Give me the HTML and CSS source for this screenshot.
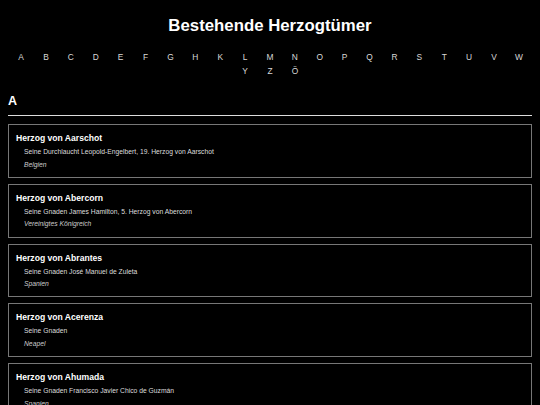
FILE: index.html
```html
<!DOCTYPE html>
<html lang="de">
<head>
<meta charset="utf-8">
<title>Bestehende Herzogtümer</title>
<link rel="stylesheet" href="styles.css">
</head>
<body>
<h1 class="title">Bestehende Herzogtümer</h1>
<nav class="alpha">
  <a href="#A">A</a><a href="#B">B</a><a href="#C">C</a><a href="#D">D</a><a href="#E">E</a><a href="#F">F</a><a href="#G">G</a><a href="#H">H</a><a href="#K">K</a><a href="#L">L</a><a href="#M">M</a><a href="#N">N</a><a href="#O">O</a><a href="#P">P</a><a href="#Q">Q</a><a href="#R">R</a><a href="#S">S</a><a href="#T">T</a><a href="#U">U</a><a href="#V">V</a><a href="#W">W</a><a href="#Y">Y</a><a href="#Z">Z</a><a href="#Oe">Ö</a>
</nav>
<section class="group" id="A">
  <h2 class="letter">A</h2>
  <div class="list">
    <div class="card">
      <div class="name">Herzog von Aarschot</div>
      <div class="holder">Seine Durchlaucht Leopold-Engelbert, 19. Herzog von Aarschot</div>
      <div class="country">Belgien</div>
    </div>
    <div class="card">
      <div class="name">Herzog von Abercorn</div>
      <div class="holder">Seine Gnaden James Hamilton, 5. Herzog von Abercorn</div>
      <div class="country">Vereinigtes Königreich</div>
    </div>
    <div class="card">
      <div class="name">Herzog von Abrantes</div>
      <div class="holder">Seine Gnaden José Manuel de Zuleta</div>
      <div class="country">Spanien</div>
    </div>
    <div class="card">
      <div class="name">Herzog von Acerenza</div>
      <div class="holder">Seine Gnaden</div>
      <div class="country">Neapel</div>
    </div>
    <div class="card">
      <div class="name">Herzog von Ahumada</div>
      <div class="holder">Seine Gnaden Francisco Javier Chico de Guzmán</div>
      <div class="country">Spanien</div>
    </div>
  </div>
</section>
</body>
</html>
```
FILE: styles.css
```css
html, body {
  background: #000;
}
body {
  margin: 0;
  padding: 8px;
  color: #fff;
  font-family: "Liberation Sans", Arial, sans-serif;
}
.title {
  margin: 8px 0 0;
  font-size: 16.8px;
  line-height: 20px;
  font-weight: bold;
  text-align: center;
}
.alpha {
  margin-top: 15px;
  display: flex;
  flex-wrap: wrap;
  justify-content: center;
}
.alpha a {
  width: 24.9px;
  text-align: center;
  color: #d8d8d8;
  text-decoration: none;
  font-size: 8.4px;
  line-height: 13.5px;
}
.letter {
  margin: 15px 0 0;
  font-size: 12.5px;
  line-height: 17px;
  font-weight: bold;
  padding-bottom: 5px;
  border-bottom: 1px solid #ddd;
}
.list {
  margin-top: 8px;
  display: flex;
  flex-direction: column;
  gap: 6px;
}
.card {
  border: 1px solid #777;
  padding: 7px 7px 5.8px;
}
.name {
  font-size: 8.6px;
  line-height: 12px;
  font-weight: bold;
  margin-bottom: 2px;
}
.holder, .country {
  font-size: 6.75px;
  line-height: 12.5px;
  padding-left: 8px;
  color: #ddd;
}
.country {
  font-style: italic;
  color: #ccc;
}
```
